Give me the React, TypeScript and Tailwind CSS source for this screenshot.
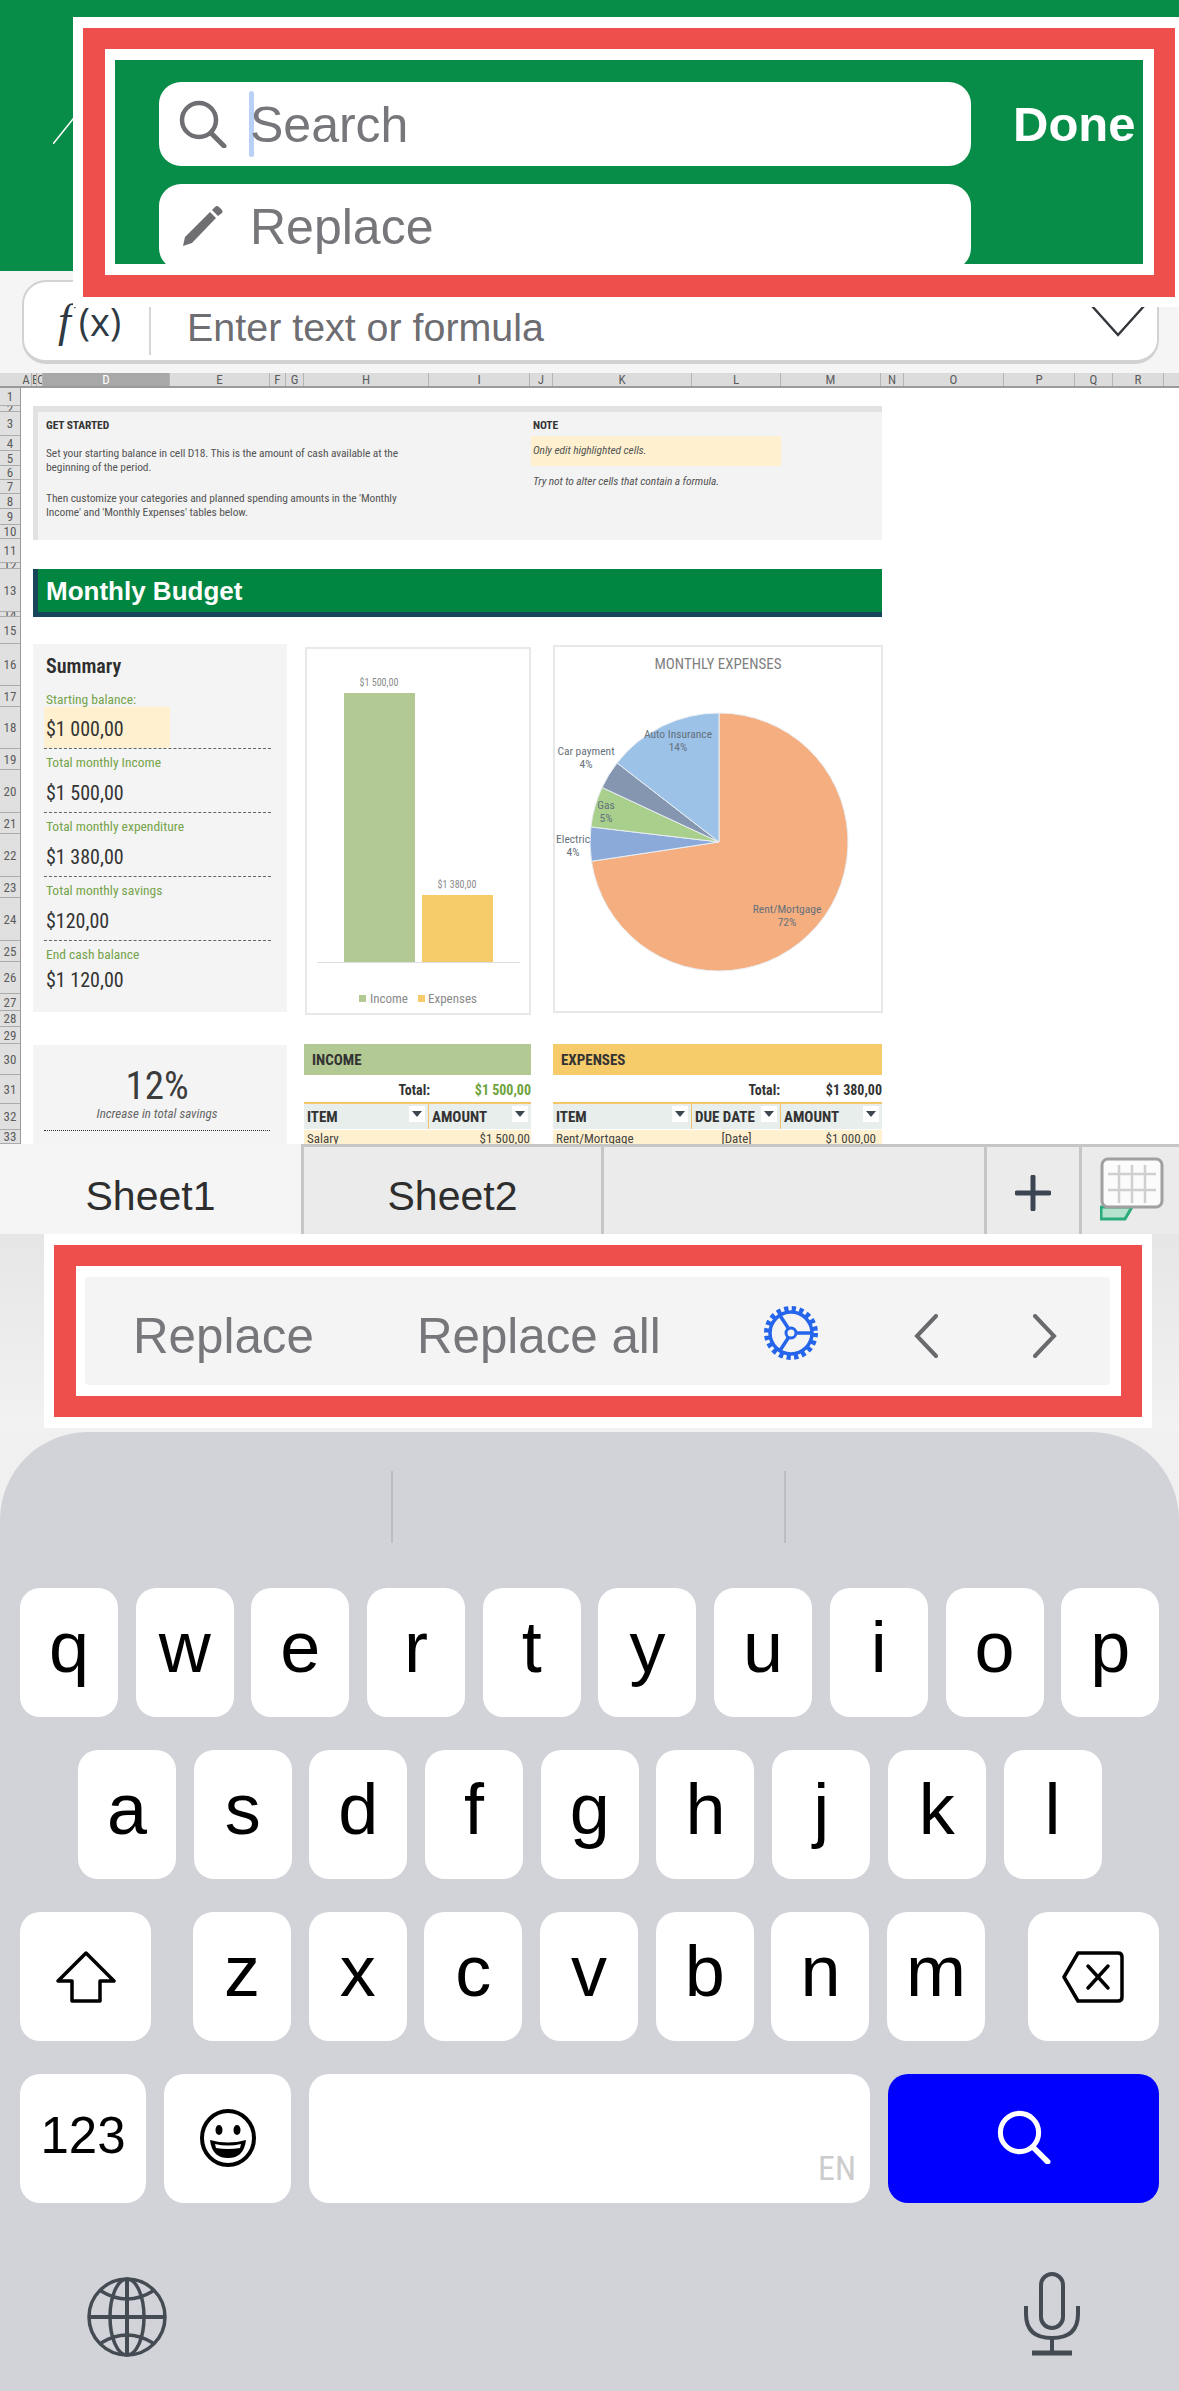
import type { ReactNode } from 'react'

const columns: Array<[string, number]> = [
  ['A', 11], ['B', 5], ['C', 6], ['D', 127], ['E', 100], ['F', 16], ['G', 18], ['H', 125], ['I', 101], ['J', 23],
  ['K', 139], ['L', 89], ['M', 100], ['N', 23], ['O', 100], ['P', 71], ['Q', 38], ['R', 51]
]

const rows = [
  18, 6, 24, 15, 15, 14, 14, 15, 16, 14, 24, 6, 43, 5, 27, 42, 21, 42, 21, 43, 21, 43, 21, 43, 21, 32, 17, 16, 17, 31, 29, 26, 14
]

const narrow = "font-['Liberation_Sans_Narrow','Roboto_Condensed','Roboto',sans-serif]"

function SearchGlyph({ className, stroke }: { className: string; stroke: string }) {
  return (
    <svg viewBox="0 0 48 48" className={className} fill="none" stroke={stroke}>
      <circle cx="20" cy="20" r="17" strokeWidth="4.5" />
      <path d="M32 33 L45 46" strokeWidth="5" strokeLinecap="round" />
    </svg>
  )
}

function FindBar() {
  return (
    <div className="absolute left-[73px] right-0 top-[17px] h-[290px] bg-white pl-[10px] pt-[11px]">
      <div className="h-[269px] w-[1092px] bg-[#ee4e4c] pl-[22px] pt-[21px]">
        <div className="h-[226px] w-[1049px] bg-white pl-[10px] pt-[11px]">
          <div className="flex h-[204px] w-[1028px] overflow-hidden bg-[#078d47] pl-[44px] pt-[22px]">
            <div className="flex w-[812px] flex-col gap-[18px]">
              <div className="flex h-[84px] shrink-0 items-center rounded-[22px] bg-white pl-[20px]">
                <SearchGlyph className="h-[48px] w-[48px]" stroke="#6e6e73" />
                <div className="ml-[22px] h-[66px] w-[5px] rounded-sm bg-[#b9d0f7]" />
                <span className="ml-[-4px] mt-[2px] text-[50px] leading-none text-[#77777b]">Search</span>
              </div>
              <div className="flex h-[86px] shrink-0 items-center rounded-[22px] bg-white pb-[2px] pl-[24px]">
                <svg viewBox="0 0 40 40" className="h-[40px] w-[40px]" fill="#6e6e73">
                  <path d="M0 40 L2 31 L27 6 L33 12 L9 37 Z" />
                  <path d="M29 4 L32 1 Q34 -1 36 1 L39 4 Q40 6 39 7 L35 10 Z" />
                </svg>
                <span className="ml-[27px] mt-[2px] text-[50px] leading-none text-[#77777b]">Replace</span>
              </div>
            </div>
            <div className="ml-[42px] flex h-[84px] items-center text-[49px] font-bold leading-none text-white">Done</div>
          </div>
        </div>
      </div>
    </div>
  )
}

function FormulaBar() {
  return (
    <div className="h-[102px] bg-[#f5f5f5] pl-[22px] pt-[9px]">
      <div className="flex h-[84px] w-[1137px] items-center rounded-[24px] border-2 border-b-4 border-[#d2d2d2] bg-white">
        <span className="ml-[34px] font-['Liberation_Serif',serif] text-[46px] italic leading-none text-[#2f3a44]">f</span>
        <span className="ml-[8px] font-['Open_Sans',sans-serif] text-[38px] leading-none text-[#2f3a44]">(x)</span>
        <div className="ml-[28px] mt-[19px] h-[48px] w-[2px] bg-[#d6d6d6]" />
        <span className="ml-[36px] mt-[13px] text-[39.4px] leading-none text-[#6d6d72]">Enter text or formula</span>
        <svg viewBox="0 0 54 32" className="ml-auto mr-[12px] h-[32px] w-[54px]" fill="none" stroke="#33373c" strokeWidth="2.5">
          <path d="M1 1 L27 30 L53 1" />
        </svg>
      </div>
    </div>
  )
}

function ColumnHeader() {
  return (
    <div className={`flex h-[15px] border-b-2 border-[#9a9a9a] bg-[#dcdcdc] pl-[21px] text-[13px] leading-[13px] text-[#5c5c5c] ${narrow}`}>
      {columns.map(([name, width]) => (
        <div
          key={name}
          style={{ width }}
          className={`shrink-0 overflow-hidden border-r border-[#b4b4b4] text-center ${name === 'D' ? 'bg-[#a8a8a8] text-white' : ''}`}
        >
          {name}
        </div>
      ))}
    </div>
  )
}

function RowHeader() {
  return (
    <div className={`w-[21px] shrink-0 border-r border-[#9a9a9a] bg-[#e0e0e0] text-[13px] text-[#5c5c5c] ${narrow}`}>
      {rows.map((height, i) => (
        <div
          key={i}
          style={{ height, lineHeight: `${height}px` }}
          className="overflow-hidden border-b border-[#ababab] text-center"
        >
          {i + 1}
        </div>
      ))}
    </div>
  )
}

function GetStarted() {
  return (
    <div className={`flex h-[134px] w-[849px] border-l-[5px] border-t-[6px] border-[#e2e2e2] bg-[#f3f3f3] text-[11.5px] leading-[14px] tracking-[-0.1px] text-[#555] ${narrow}`}>
      <div className="w-[493px] pl-[8px] pt-[6px]">
        <p className="font-bold text-[#333]">GET STARTED</p>
        <p className="mt-[14px]">Set your starting balance in cell D18. This is the amount of cash available at the</p>
        <p>beginning of the period.</p>
        <p className="mt-[17px]">Then customize your categories and planned spending amounts in the 'Monthly</p>
        <p>Income' and 'Monthly Expenses' tables below.</p>
      </div>
      <div className="pt-[6px] italic">
        <p className="pl-[2px] font-bold not-italic text-[#333]">NOTE</p>
        <p className="mt-[4px] h-[30px] w-[250px] bg-[#fff1cf] pl-[2px] leading-[28px]">Only edit highlighted cells.</p>
        <p className="mt-[8px] pl-[2px]">Try not to alter cells that contain a formula.</p>
      </div>
    </div>
  )
}

function SummaryRow({ label, value, h1, h2, dashed = true, yellow = false }: { label: string; value: string; h1: number; h2: number; dashed?: boolean; yellow?: boolean }) {
  return (
    <>
      <div style={{ height: h1 }} className="flex items-center pl-[2px] pt-[6px] text-[13.5px] text-[#74a34a]">{label}</div>
      <div style={{ height: h2 }} className={`flex ${dashed ? 'border-b border-dashed border-[#666]' : ''}`}>
        <div className={`flex w-[126px] items-center pl-[2px] pt-[3px] text-[20px] text-[#333] ${yellow ? 'bg-[#fff1cf]' : ''}`}>{value}</div>
      </div>
    </>
  )
}

function Summary() {
  return (
    <div className={`h-[368px] w-[254px] shrink-0 bg-[#f4f4f4] pl-[11px] pr-[16px] ${narrow}`}>
      <div className="flex h-[42px] items-center pl-[2px] pt-[1px] text-[20px] font-semibold text-[#2e2e2e]">Summary</div>
      <SummaryRow label="Starting balance:" value="$1 000,00" h1={21} h2={42} yellow />
      <SummaryRow label="Total monthly Income" value="$1 500,00" h1={21} h2={43} />
      <SummaryRow label="Total monthly expenditure" value="$1 380,00" h1={21} h2={43} />
      <SummaryRow label="Total monthly savings" value="$120,00" h1={21} h2={43} />
      <SummaryRow label="End cash balance" value="$1 120,00" h1={21} h2={32} dashed={false} />
    </div>
  )
}

function BarChart() {
  return (
    <div className={`mt-[3px] h-[368px] w-[226px] shrink-0 border-2 border-[#e8e8e8] bg-white ${narrow}`}>
      <svg viewBox="307 649 222 364" className="h-full w-full" fontSize="10" fill="#8a8a8a">
        <text x="379" y="686" textAnchor="middle">$1 500,00</text>
        <rect x="344" y="693" width="71" height="269" fill="#b2c993" />
        <text x="457" y="888" textAnchor="middle">$1 380,00</text>
        <rect x="422" y="895" width="71" height="67" fill="#f6cb69" />
        <line x1="317" y1="962.5" x2="520" y2="962.5" stroke="#dedede" />
        <rect x="359" y="995" width="7" height="7" fill="#b2c993" />
        <text x="370" y="1003" fontSize="13">Income</text>
        <rect x="418" y="995" width="7" height="7" fill="#f6cb69" />
        <text x="428" y="1003" fontSize="13">Expenses</text>
      </svg>
    </div>
  )
}

function slice(from: number, to: number) {
  const point = (deg: number) => {
    const rad = ((deg - 90) * Math.PI) / 180
    return `${719 + 129 * Math.cos(rad)} ${842 + 129 * Math.sin(rad)}`
  }
  return `M719 842 L${point(from)} A129 129 0 ${to - from > 180 ? 1 : 0} 1 ${point(to)} Z`
}

const pieSlices: Array<[number, number, string]> = [
  [0, 261.4, '#f4ae80'],
  [261.4, 276.7, '#8baada'],
  [276.7, 295, '#a8d08c'],
  [295, 307.8, '#8496b0'],
  [307.8, 360, '#9cc2e8']
]

const pieLabels: Array<[string, string, number, number]> = [
  ['Auto Insurance', '14%', 678, 738],
  ['Car payment', '4%', 586, 755],
  ['Gas', '5%', 606, 809],
  ['Electric', '4%', 573, 843],
  ['Rent/Mortgage', '72%', 787, 913]
]

function PieChart() {
  return (
    <div className={`mt-px h-[368px] w-[330px] shrink-0 border-2 border-[#e8e8e8] bg-white ${narrow}`}>
      <svg viewBox="555 647 326 364" className="h-full w-full" fontSize="11.5" fill="#66717b">
        <text x="718" y="669" textAnchor="middle" fontSize="15" fill="#7f7f7f">MONTHLY EXPENSES</text>
        {pieSlices.map(([from, to, color]) => (
          <path key={from} d={slice(from, to)} fill={color} stroke="#e9eef3" strokeWidth="1" />
        ))}
        {pieLabels.map(([name, pct, x, y]) => (
          <text key={name} x={x} textAnchor="middle">
            <tspan x={x} y={y}>{name}</tspan>
            <tspan x={x} y={y + 13}>{pct}</tspan>
          </text>
        ))}
      </svg>
    </div>
  )
}

function FilterButton() {
  return (
    <div className="mr-[3px] mt-[2px] flex h-[16px] w-[16px] shrink-0 items-center justify-center bg-white">
      <svg viewBox="0 0 10 6" className="w-[10px]" fill="#3f4650"><path d="M0 0 H10 L5 6 Z" /></svg>
    </div>
  )
}

function HeaderCell({ label, width, last = false }: { label: string; width: number; last?: boolean }) {
  return (
    <div style={{ width }} className={`flex h-[25px] justify-between bg-[#e7eeec] pl-[3px] ${last ? '' : 'border-r border-[#f0c468]'}`}>
      <span className="mt-[6px] text-[15px] font-bold leading-none text-[#333]">{label}</span>
      <FilterButton />
    </div>
  )
}

function BudgetTable({
  title,
  color,
  total,
  totalColor,
  totalWidth,
  headers,
  cells
}: {
  title: string
  color: string
  total: string
  totalColor: string
  totalWidth: number
  headers: Array<[string, number]>
  cells: ReactNode
}) {
  const width = headers.reduce((sum, [, w]) => sum + w, 0)
  return (
    <div style={{ width }} className={`shrink-0 ${narrow}`}>
      <div className={`flex h-[31px] items-center pl-[8px] pt-[2px] text-[15px] font-bold text-[#333] ${color}`}>{title}</div>
      <div className="flex h-[29px] items-center justify-end border-b-2 border-[#f3c66c] pt-[3px] text-[14px] font-bold text-[#333]">
        <span>Total:</span>
        <span style={{ width: totalWidth }} className={`text-right ${totalColor}`}>{total}</span>
      </div>
      <div className="flex">
        {headers.map(([label, w], i) => (
          <HeaderCell key={label} label={label} width={w} last={i === headers.length - 1} />
        ))}
      </div>
      <div className="flex h-[18px] border-t border-white bg-[#fff1cf] text-[13px] leading-[18px] text-[#444]">{cells}</div>
    </div>
  )
}

function Sheet() {
  return (
    <div className="flex h-[756px] overflow-hidden bg-white">
      <RowHeader />
      <div className="pl-[12px] pt-[18px]">
        <GetStarted />
        <div className="mt-[29px] h-[48px] w-[849px] border-b-[5px] border-l-[5px] border-[#17465a] bg-[#018642] pl-[8px] text-[26px] font-bold leading-[45px] text-white">
          Monthly Budget
        </div>
        <div className="mt-[27px] flex items-start">
          <Summary />
          <div className="ml-[18px]"><BarChart /></div>
          <div className="ml-[22px]"><PieChart /></div>
        </div>
        <div className="mt-[29px] flex items-start">
          <div className={`mt-px h-[120px] w-[254px] shrink-0 bg-[#f4f4f4] pl-[11px] pr-[17px] pt-[21px] text-center ${narrow}`}>
            <p className="text-[39px] leading-[40px] text-[#3c3c3c]">12%</p>
            <p className="text-[13px] italic leading-[16px] text-[#666]">Increase in total savings</p>
            <div className="mt-[8px] border-b border-dotted border-[#333]" />
          </div>
          <div className="ml-[17px]">
            <BudgetTable
              title="INCOME"
              color="bg-[#b2c993]"
              total="$1 500,00"
              totalColor="text-[#6ea33c]"
              totalWidth={101}
              headers={[['ITEM', 125], ['AMOUNT', 102]]}
              cells={
                <>
                  <span className="w-[125px] pl-[3px]">Salary</span>
                  <span className="w-[102px] pr-px text-right">$1 500,00</span>
                </>
              }
            />
          </div>
          <div className="ml-[22px]">
            <BudgetTable
              title="EXPENSES"
              color="bg-[#f6cb69]"
              total="$1 380,00"
              totalColor="text-[#333]"
              totalWidth={102}
              headers={[['ITEM', 139], ['DUE DATE', 89], ['AMOUNT', 101]]}
              cells={
                <>
                  <span className="w-[139px] pl-[3px]">Rent/Mortgage</span>
                  <span className="w-[89px] text-center">[Date]</span>
                  <span className="w-[101px] pr-[6px] text-right">$1 000,00</span>
                </>
              }
            />
          </div>
        </div>
      </div>
    </div>
  )
}

function Tabs() {
  return (
    <div className="flex h-[90px] bg-[#ebebeb] text-[41px] leading-none text-[#2e2e2e]">
      <div className="flex w-[301px] items-center justify-center bg-[#f5f5f5] pt-[14px]">Sheet1</div>
      <div className="flex flex-1 border-t-[3px] border-[#c6c6c6]">
        <div className="flex w-[303px] items-center justify-center border-x-[3px] border-[#c6c6c6] pt-[12px]">Sheet2</div>
        <div className="w-[383px] border-r-[3px] border-[#c6c6c6]" />
        <div className="flex w-[95px] items-center justify-center border-r-[3px] border-[#c6c6c6] pt-[4px]">
          <svg viewBox="0 0 36 36" className="h-[36px] w-[36px]" stroke="#3b4652" strokeWidth="5" strokeLinecap="round">
            <path d="M18 2 V34 M2 18 H34" />
          </svg>
        </div>
        <div className="pl-[18px] pt-[10px]">
          <svg viewBox="0 0 64 64" className="h-[64px] w-[64px]" fill="none">
            <path d="M1 50 H32 L25 62 H1 Z" fill="#b5e2cd" stroke="#2bab7c" strokeWidth="3" />
            <rect x="2" y="2" width="60" height="48" rx="6" fill="#fbfbfb" stroke="#a0a0a0" strokeWidth="3" />
            <path d="M8 17 H56 M8 33 H56 M19 8 V46 M32 8 V46 M45 8 V46" stroke="#cfcfcf" strokeWidth="2.5" />
          </svg>
        </div>
      </div>
    </div>
  )
}

function Gear() {
  return (
    <svg viewBox="0 0 56 56" className="h-[56px] w-[56px]" fill="none" stroke="#2465ec">
      <circle cx="28" cy="28" r="24" strokeWidth="6" strokeDasharray="4.2 3.34" />
      <circle cx="28" cy="28" r="21" strokeWidth="3.5" />
      <circle cx="28" cy="28" r="5" strokeWidth="3" />
      <path d="M33 28 H50 M25.5 23.5 L16 9 M25.5 32.5 L16 47" strokeWidth="3.5" />
    </svg>
  )
}

function ReplaceBar() {
  return (
    <div className="h-[198px] bg-linear-to-b from-[#e6e6e6] to-[#f2f2f2] pl-[44px]">
      <div className="h-[194px] w-[1108px] bg-white pl-[10px] pt-[11px]">
        <div className="h-[172px] w-[1088px] bg-[#ee4e4c] pl-[22px] pt-[21px]">
          <div className="h-[130px] w-[1045px] bg-white pl-[9px] pt-[11px]">
            <div className="flex h-[108px] w-[1025px] items-center rounded-[4px] bg-[#f4f4f4] pt-[10px] text-[49.3px] leading-none text-[#77777b]">
              <span className="ml-[48px]">Replace</span>
              <span className="ml-[103px]">Replace all</span>
              <div className="ml-[102px] mt-[-6px]"><Gear /></div>
              <svg viewBox="0 0 24 44" className="ml-[95px] h-[44px] w-[24px]" fill="none" stroke="#6a6a6e" strokeWidth="4" strokeLinecap="round">
                <path d="M22 2 L3 22 L22 42" />
              </svg>
              <svg viewBox="0 0 24 44" className="ml-[95px] h-[44px] w-[24px]" fill="none" stroke="#6a6a6e" strokeWidth="4" strokeLinecap="round">
                <path d="M2 2 L21 22 L2 42" />
              </svg>
            </div>
          </div>
        </div>
      </div>
    </div>
  )
}

function Key({ children, width = 98, tone = 'bg-white text-black' }: { children?: ReactNode; width?: number; tone?: string }) {
  return (
    <div style={{ width }} className={`relative flex h-[129px] shrink-0 items-center justify-center rounded-[20px] pb-[12px] text-[72px] leading-none ${tone}`}>
      {children}
    </div>
  )
}

function Keyboard() {
  return (
    <div className="h-[959px] rounded-t-[88px] bg-[#d1d3d9]">
      <div className="flex h-[156px] pl-[391px] pt-[39px]">
        <div className="h-[72px] w-[2px] bg-[#bcbdc3]" />
        <div className="ml-[391px] h-[72px] w-[2px] bg-[#bcbdc3]" />
      </div>
      <div className="flex gap-[17.7px] pl-[20px]">
        {'qwertyuiop'.split('').map((k) => <Key key={k}>{k}</Key>)}
      </div>
      <div className="mt-[33px] flex gap-[17.7px] pl-[78px]">
        {'asdfghjkl'.split('').map((k) => <Key key={k}>{k}</Key>)}
      </div>
      <div className="mt-[33px] flex gap-[17.7px] pl-[20px]">
        <Key width={131}>
          <svg viewBox="0 0 60 52" className="mt-[12px] h-[52px] w-[60px]" fill="none" stroke="#000" strokeWidth="3.5" strokeLinejoin="round">
            <path d="M30 2 L58 30 H44 V50 H16 V30 H2 Z" />
          </svg>
        </Key>
        <div className="w-[6.6px] shrink-0" />
        {'zxcvbnm'.split('').map((k) => <Key key={k}>{k}</Key>)}
        <div className="w-[7.4px] shrink-0" />
        <Key width={131}>
          <svg viewBox="0 0 62 52" className="mt-[12px] h-[52px] w-[62px]" fill="none" stroke="#000" strokeWidth="3.5" strokeLinejoin="round">
            <path d="M16 2 H56 Q60 2 60 6 V46 Q60 50 56 50 H16 L2 26 Z" />
            <path d="M26 15 L46 37 M46 15 L26 37" strokeLinecap="round" />
          </svg>
        </Key>
      </div>
      <div className="mt-[33px] flex gap-[18px] pl-[20px]">
        <Key width={126}><span className="mt-[6px] text-[51px]">123</span></Key>
        <Key width={127}>
          <svg viewBox="0 0 56 58" className="mt-[10px] h-[58px] w-[56px]" fill="none" stroke="#000">
            <ellipse cx="28" cy="29" rx="26" ry="27" strokeWidth="4" />
            <ellipse cx="19" cy="21" rx="3.5" ry="5" fill="#000" stroke="none" />
            <ellipse cx="37" cy="21" rx="3.5" ry="5" fill="#000" stroke="none" />
            <path d="M10 31 Q28 36 46 31 Q44 49 28 49 Q12 49 10 31 Z" fill="#000" stroke="none" />
            <path d="M15 35 Q28 38 41 35 L40 39 Q28 41 16 39 Z" fill="#fff" stroke="none" />
          </svg>
        </Key>
        <Key width={561}>
          <span className={`absolute bottom-[18px] right-[14px] text-[34px] text-[#cccccc] ${narrow}`}>EN</span>
        </Key>
        <Key width={271} tone="bg-[#0000ff] text-white">
          <SearchGlyph className="mt-[8px] h-[54px] w-[54px]" stroke="#ffffff" />
        </Key>
      </div>
      <div className="flex items-start justify-between pl-[87px] pr-[98px] pt-[69px]">
        <svg viewBox="0 0 80 80" className="mt-[5px] h-[80px] w-[80px]" fill="none" stroke="#454b52" strokeWidth="3.5">
          <circle cx="40" cy="40" r="38" />
          <ellipse cx="40" cy="40" rx="17" ry="38" />
          <path d="M40 2 V78 M2 40 H78" strokeWidth="4" />
          <path d="M14 14 Q40 30 66 14 M14 66 Q40 50 66 66" />
        </svg>
        <svg viewBox="0 0 58 84" className="h-[84px] w-[58px]" fill="none" stroke="#454b52" strokeWidth="4">
          <rect x="18" y="2" width="22" height="54" rx="11" />
          <path d="M3 34 V42 Q3 66 29 66 Q55 66 55 42 V34" />
          <path d="M29 66 V80" />
          <path d="M9 81 H49" strokeWidth="5" />
        </svg>
      </div>
    </div>
  )
}

export default function App() {
  return (
    <div className="relative h-[2391px] w-[1179px] overflow-hidden bg-[#f0f0f0] font-['Liberation_Sans',Arial,sans-serif]">
      <div className="relative h-[271px] bg-[#078d47]">
        <svg viewBox="0 0 24 30" className="ml-[53px] h-[144px] w-[24px] pt-[114px]" preserveAspectRatio="none" fill="none" stroke="#fff" strokeWidth="1.5">
          <path d="M0 30 L24 0" />
        </svg>
      </div>
      <FormulaBar />
      <ColumnHeader />
      <Sheet />
      <Tabs />
      <ReplaceBar />
      <Keyboard />
      <FindBar />
    </div>
  )
}
